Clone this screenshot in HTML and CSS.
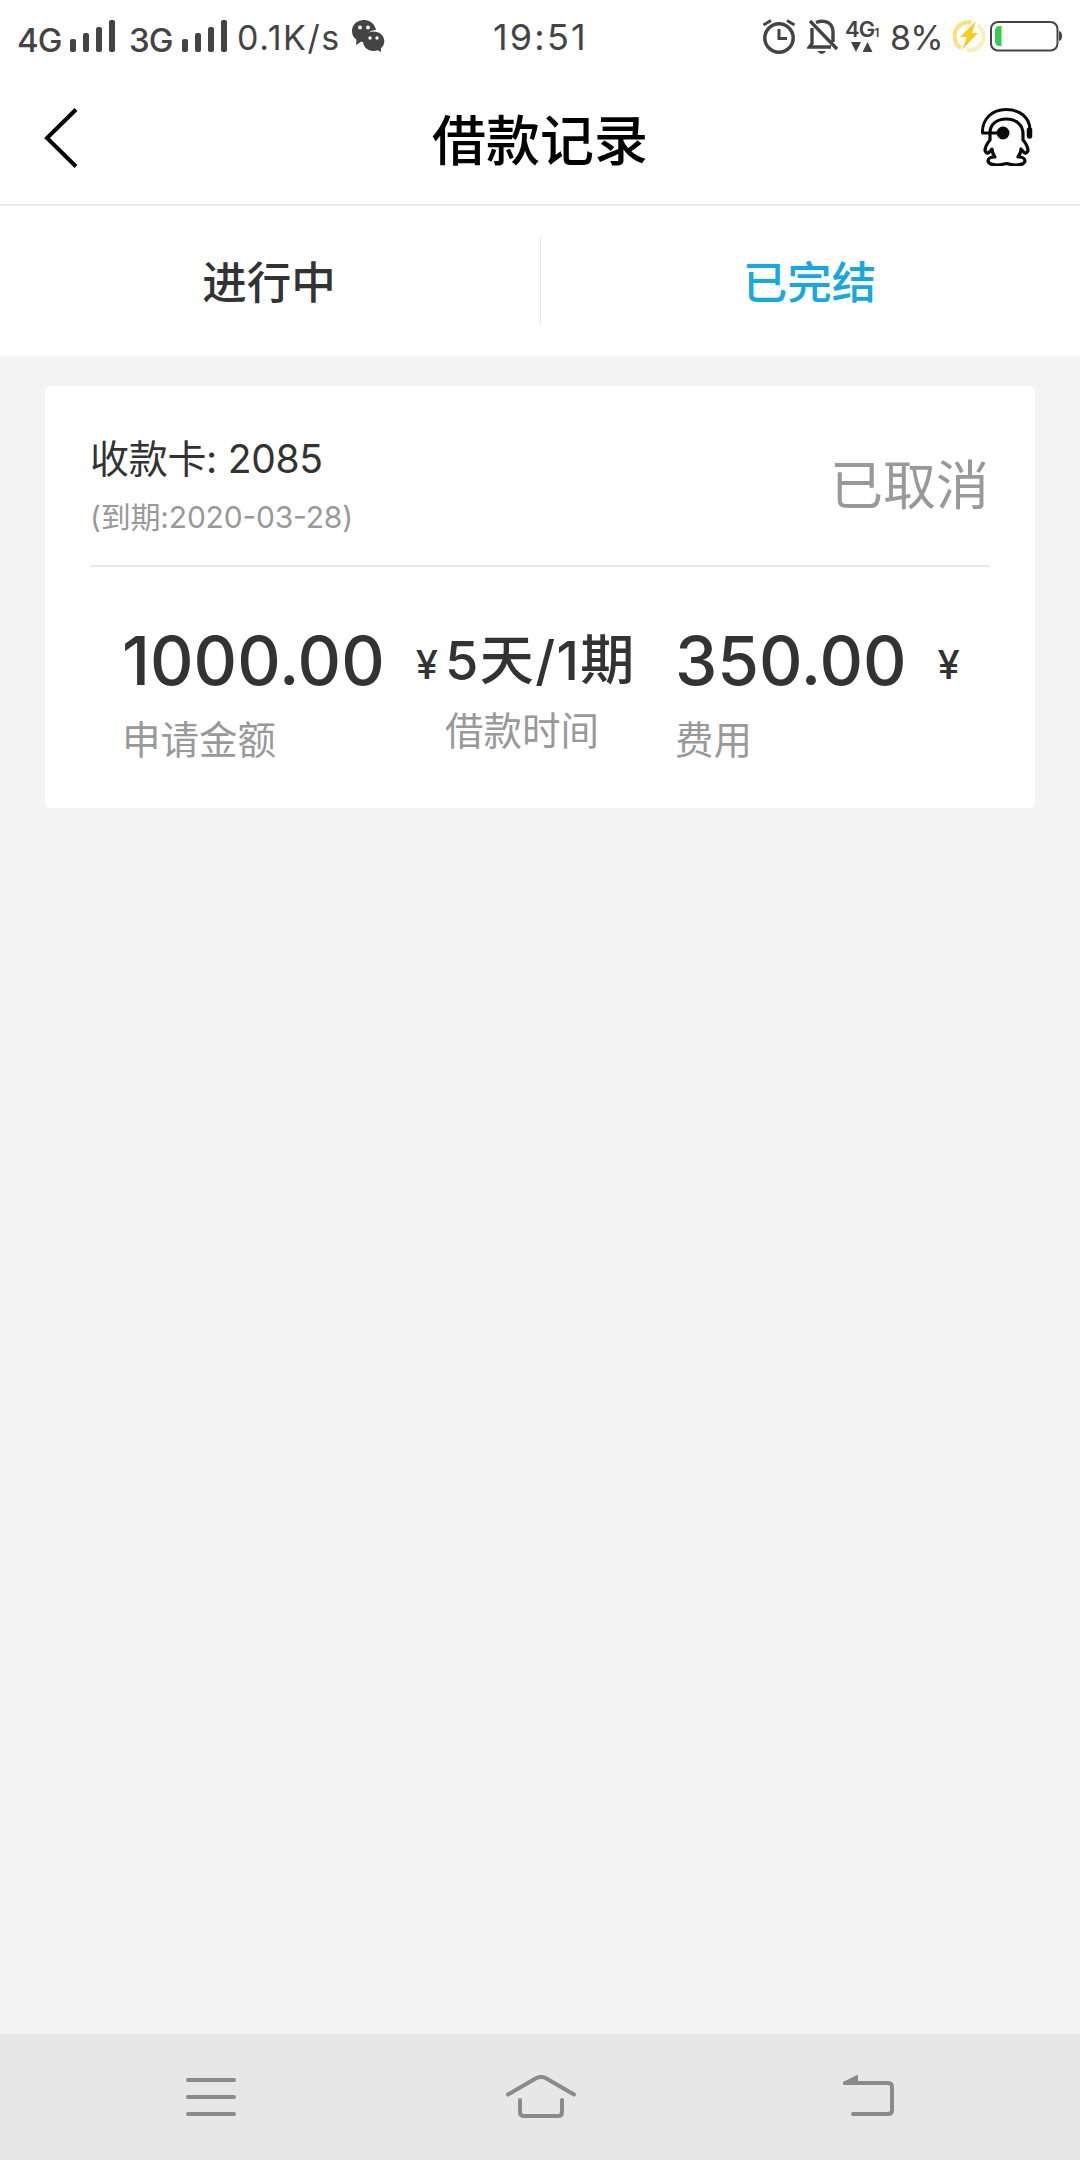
FILE: index.html
```html
<!DOCTYPE html>
<html lang="zh-CN">
<head>
<meta charset="UTF-8">
<meta name="viewport" content="width=device-width,initial-scale=1">
<title>借款记录</title>
<link rel="stylesheet" href="styles.css">
</head>
<body>
<div class="status-bar">
  <div class="status-left">
    <span class="net">4G</span>
    <svg class="signal" width="46" height="33" viewBox="0 0 46 33" fill="currentColor"><rect y="19" width="6" height="13" rx="2"/><rect x="13" y="13" width="6" height="19" rx="2"/><rect x="26" y="7" width="6" height="25" rx="2"/><rect x="39" width="6" height="32" rx="2"/></svg>
    <span class="net">3G</span>
    <svg class="signal" width="46" height="33" viewBox="0 0 46 33" fill="currentColor"><rect y="19" width="6" height="13" rx="2"/><rect x="13" y="13" width="6" height="19" rx="2"/><rect x="26" y="7" width="6" height="25" rx="2"/><rect x="39" width="6" height="32" rx="2"/></svg>
    <span class="speed">0.1K/s</span>
    <svg class="wechat" width="34" height="34" viewBox="0 0 34 34" fill="currentColor">
      <path d="M13 0C5.500 0 1 5 1 11c0 4 1.500 6.500 4.500 8.700L5 25l5-3.200 4 .4C13 15 18 10.500 25 10 24 4 19 0 13 0z"/>
      <path d="M22.500 11.500c-6 0-10.500 4.200-10.500 9.800 0 5.500 4.500 9.700 10.500 9.700 1.500 0 3-.2 4.200-.7L30 32v-3.700c2-1.700 3.300-4.200 3.300-7 0-5.600-4.800-9.800-10.800-9.800z"/>
      <g fill="#fff"><circle cx="9" cy="7.500" r="1.900"/><circle cx="17" cy="7.500" r="1.900"/><circle cx="19" cy="18" r="1.700"/><circle cx="26" cy="18" r="1.700"/></g>
    </svg>
  </div>
  <div class="status-time">19:51</div>
  <div class="status-right">
    <svg class="alarm" width="34" height="36" viewBox="0 0 34 36" fill="none" stroke="currentColor" stroke-width="3.500"><circle cx="17" cy="19" r="14.200"/><path d="M1.500 6 9 1.500M32.500 6 25 1.500M17 10v9.500h8" stroke-width="3"/></svg>
    <svg class="mute" width="32" height="36" viewBox="0 0 32 36" fill="none" stroke="currentColor" stroke-width="3.400"><path d="M5 9v15.500L2.500 28H24M9 3.500C18 0 26 4 26 13v10M3 2l27 28"/><path d="M10.500 32h8.500q-1.500 3-4.200 3t-4.300-3z" fill="currentColor" stroke="none"/></svg>
    <div class="data">
      <div class="data-net">4G<small>1</small></div>
      <svg width="22" height="10" viewBox="0 0 22 10" fill="currentColor"><path d="M0 0h10L5 10zM11.500 10h10l-5-10z"/></svg>
    </div>
    <span class="percent">8%</span>
    <svg class="charge" width="32" height="32" viewBox="0 0 32 32"><path d="M18 2.400A14 14 0 0 0 8 28" fill="none" stroke="#fae078" stroke-width="4"/><path d="M25 5a14 14 0 0 1-11 25" fill="none" stroke="#fceeb8" stroke-width="4"/><path d="M23 1 7 17h7L9 30l16-17h-6z" fill="#f9ce22"/></svg>
    <svg class="battery" width="73" height="31" viewBox="0 0 73 31"><rect x="1" y="1" width="66.500" height="28.500" rx="7" fill="#fff" stroke="#444" stroke-width="2"/><path d="M69 10q3 .5 3 5t-3 5z" fill="#444"/><path d="M11.500 5H10Q5 5 5 10v10q0 5 5 5h1.500z" fill="#32cd4b"/></svg>
  </div>
</div>
<header class="header">
  <svg class="back" width="34" height="60" viewBox="0 0 34 60" fill="none" stroke="#000" stroke-width="4"><path d="M32 1.500 3 30l29 28.500"/></svg>
  <h1>借款记录</h1>
  <svg class="service" width="52" height="58" viewBox="0 0 52 58" fill="none" stroke="#0a0a0a" stroke-width="3" stroke-linecap="round" stroke-linejoin="round">
    <path d="M22 25H1.500C1 11 11 1.500 25 1.500c14 0 23.500 8 24 20"/>
    <path d="M48.500 22v6" stroke-width="5.500"/>
    <circle cx="22" cy="25" r="5" fill="#0a0a0a"/>
    <path d="M9 32V25C9 16 16 11 25.500 11S42 17 42 26v6q5 6 5 10.500-1 3-3.500 2.500L40 41q0 4-3 8 7 0 7 4-1 4-9 4-4 0-9.500-1.500Q20 57 16 57q-8 0-9-4 0-4 7-4-3-4-3-8L7.500 45Q5 45.500 4 42.500 4 38 9 32z" stroke-width="3.200"/>
  </svg>
</header>
<nav class="tabs">
  <a class="tab">进行中</a>
  <a class="tab active">已完结</a>
</nav>
<main class="content">
  <section class="card">
    <div class="card-top">
      <div>
        <div class="bank">收款卡: 2085</div>
        <div class="due">(到期:<span class="date">2020-03-28</span>)</div>
      </div>
      <div class="state">已取消</div>
    </div>
    <div class="card-info">
      <div class="item item-amount">
        <div class="value">1000.00<span class="unit">¥</span></div>
        <div class="label">申请金额</div>
      </div>
      <div class="item item-term">
        <div class="value value-term">5天/1期</div>
        <div class="label">借款时间</div>
      </div>
      <div class="item">
        <div class="value">350.00<span class="unit">¥</span></div>
        <div class="label">费用</div>
      </div>
    </div>
  </section>
</main>
<footer class="nav-bar">
  <svg class="menu" width="50" height="40" viewBox="0 0 50 40"><path d="M2 3h46M2 20h46M2 37h46"/></svg>
  <svg class="home" width="72" height="44" viewBox="0 0 72 44"><path d="M3 19.500 31 3.200q5-2.500 10 0L69 19.500M15 25v12q0 4 4 4h34q4 0 4-4V25"/></svg>
  <svg width="52" height="42" viewBox="0 0 52 42"><path d="M2 8h43q4 0 4 4v23q0 4-4 4H10"/><path class="solid" d="M1 6.500 14 0q1 0 1 1v9H1.500Q-1 9 1 6.500z"/></svg>
</footer>
</body>
</html>
```

FILE: styles.css
```css
:root {
  --text: #333;
  --muted: #999;
  --line: #e9e9e9;
  --blue: #16a8de;
}
* { box-sizing: border-box; }
body {
  margin: 0;
  height: 2160px;
  display: flex;
  flex-direction: column;
  background: #f3f3f3;
  color: var(--text);
  font-family: Inter, "Noto Sans CJK SC", sans-serif;
}
svg { display: block; flex: none; }

.status-bar {
  display: flex;
  height: 74px;
  background: #fff;
  color: #444;
  line-height: 40px;
  white-space: nowrap;
}
.status-left { display: flex; width: 493px; padding: 20px 0 0 17px; }
.net { width: 53px; font-size: 33px; font-weight: 500; letter-spacing: -1px; }
.signal { margin-right: 13px; }
.speed { width: 114px; margin-left: -4px; margin-top: -2px; font-size: 34px; letter-spacing: 1.6px; }
.status-time { width: 269px; padding-top: 17px; font-size: 36px; letter-spacing: 2.2px; }
.status-right { display: flex; padding-top: 19px; }
.mute { margin-left: 11px; }
.data { width: 36px; margin-left: 6px; }
.data-net { height: 23px; line-height: 20px; font-size: 22px; font-weight: 600; letter-spacing: -1px; }
.data-net small { margin-left: 0; font-size: 12px; }
.data svg { margin-left: 6px; }
.percent { width: 61px; margin-left: 9px; margin-top: -1px; font-size: 34px; letter-spacing: -.8px; }
.charge { margin: 1px 0 0 2px; }
.battery { margin: 2px 0 0 5px; }

.header {
  display: grid;
  grid-template-columns: 52px 1fr 52px;
  height: 132px;
  padding: 34px 47px 0 44px;
  background: #fff;
  border-bottom: 2px solid var(--line);
}
.header h1 { margin: -6px 0 0 3px; font-size: 54px; line-height: 80px; font-weight: 500; color: #000; text-align: center; }

.tabs { display: grid; grid-template-columns: 1fr 1fr; height: 150px; padding: 30px 0; background: #fff; }
.tab { height: 90px; line-height: 95px; text-align: center; font-size: 44.5px; font-weight: 500; padding-right: 2px; }
.tab + .tab { border-left: 1px solid var(--line); }
.tab.active { color: var(--blue); }

.content { flex: 1; padding: 30px 45px; }
.card { height: 422px; padding: 0 45px; background: #fff; border-radius: 6px; }
.card-top { display: flex; justify-content: space-between; height: 181px; padding-top: 43px; border-bottom: 2px solid var(--line); }
.bank { height: 60px; line-height: 60px; font-size: 39px; letter-spacing: -.3px; }
.due { height: 56px; line-height: 56px; font-size: 30px; letter-spacing: -.2px; color: var(--muted); }
.date { font-feature-settings: "case"; }
.state { margin: 19px 1px 0 0; font-size: 53px; line-height: 76px; color: var(--muted); }
.card-info { display: flex; padding: 52px 0 0 32px; white-space: nowrap; }
.item-amount { width: 323px; }
.item-term { width: 230px; }
.value { height: 84px; line-height: 84px; font-size: 67.5px; font-weight: 500; }
.value-term { height: 75px; font-size: 54px; letter-spacing: 1.4px; }
.unit { margin-left: 31px; font-size: 40px; vertical-align: 6px; line-height: 1; }
.label { line-height: 56px; margin-top: 9px; font-size: 38.5px; color: var(--muted); }

.nav-bar { display: flex; justify-content: space-between; align-items: flex-start; height: 126px; padding: 41px 185px 0 186px; background: #e7e7e7; }
.nav-bar svg { fill: none; stroke: #8a8a8a; stroke-width: 4; stroke-linecap: round; stroke-linejoin: round; }
.nav-bar .menu { margin-top: 2px; }
.nav-bar .home { margin-left: 2px; }
.nav-bar .solid { fill: #8a8a8a; stroke: none; }
```
